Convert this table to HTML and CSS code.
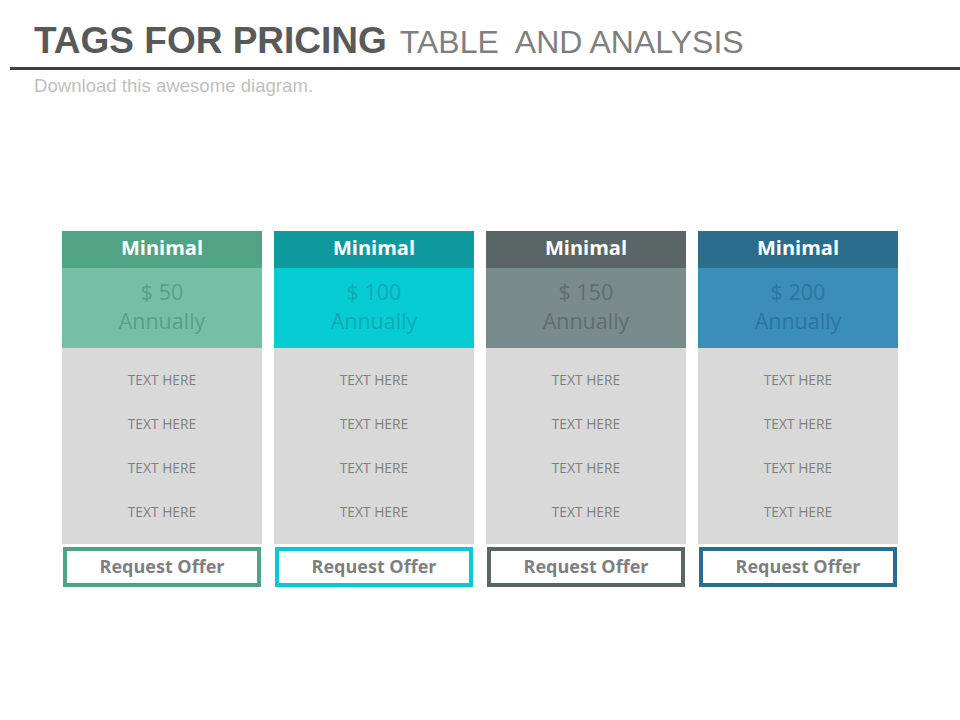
FILE: index.html
```html
<!DOCTYPE html>
<html>
<head>
<meta charset="utf-8">
<link rel="stylesheet" href="styles.css">
</head>
<body>
<header class="top">
  <h1 class="title"><span class="title-bold">TAGS FOR PRICING</span> <span class="title-light">TABLE&nbsp; AND ANALYSIS</span></h1>
  <div class="rule"></div>
  <p class="subtitle">Download this awesome diagram.</p>
</header>
<main class="plans">
  <section class="plan plan-green">
    <div class="plan-head">Minimal</div>
    <div class="plan-price"><div>$ 50</div><div>Annually</div></div>
    <ul class="plan-list"><li>TEXT HERE</li><li>TEXT HERE</li><li>TEXT HERE</li><li>TEXT HERE</li></ul>
    <div class="plan-btn">Request Offer</div>
  </section>
  <section class="plan plan-cyan">
    <div class="plan-head">Minimal</div>
    <div class="plan-price"><div>$ 100</div><div>Annually</div></div>
    <ul class="plan-list"><li>TEXT HERE</li><li>TEXT HERE</li><li>TEXT HERE</li><li>TEXT HERE</li></ul>
    <div class="plan-btn">Request Offer</div>
  </section>
  <section class="plan plan-slate">
    <div class="plan-head">Minimal</div>
    <div class="plan-price"><div>$ 150</div><div>Annually</div></div>
    <ul class="plan-list"><li>TEXT HERE</li><li>TEXT HERE</li><li>TEXT HERE</li><li>TEXT HERE</li></ul>
    <div class="plan-btn">Request Offer</div>
  </section>
  <section class="plan plan-blue">
    <div class="plan-head">Minimal</div>
    <div class="plan-price"><div>$ 200</div><div>Annually</div></div>
    <ul class="plan-list"><li>TEXT HERE</li><li>TEXT HERE</li><li>TEXT HERE</li><li>TEXT HERE</li></ul>
    <div class="plan-btn">Request Offer</div>
  </section>
</main>
</body>
</html>
```
FILE: styles.css
```css
html, body {
  margin: 0;
  padding: 0;
  background: #ffffff;
  width: 960px;
  height: 720px;
  overflow: hidden;
}
body {
  font-family: "Liberation Sans", Arial, sans-serif;
}
.top {
  padding-top: 20px;
}
.title {
  margin: 0 0 0 34px;
  height: 47px;
  line-height: 42px;
  white-space: nowrap;
}
.title-bold {
  font-size: 37px;
  font-weight: bold;
  color: #595959;
  margin-right: 4px;
}
.title-light {
  font-size: 32px;
  font-weight: normal;
  color: #7f7f7f;
}
.rule {
  margin-left: 10px;
  height: 3px;
  background: #404040;
}
.subtitle {
  margin: 5px 0 0 34px;
  font-size: 18.6px;
  line-height: 22px;
  color: #bfbfbf;
}
.plans {
  display: flex;
  gap: 12px;
  margin: 134px 0 0 62px;
  font-family: "Open Sans", "Noto Sans", sans-serif;
}
.plan {
  width: 200px;
  display: flex;
  flex-direction: column;
}
.plan-head {
  height: 37px;
  line-height: 33px;
  text-align: center;
  color: #ffffff;
  font-weight: bold;
  font-size: 20px;
}
.plan-price {
  height: 80px;
  box-sizing: border-box;
  padding-top: 9px;
  text-align: center;
  font-size: 21.5px;
  line-height: 29px;
}
.plan-list {
  list-style: none;
  margin: 0;
  padding: 10px 0;
  background: #d9d9d9;
  height: 196px;
  box-sizing: border-box;
}
.plan-list li {
  height: 44px;
  line-height: 44px;
  text-align: center;
  font-size: 13.8px;
  color: #7f7f7f;
}
.plan-btn {
  margin: 3px 1px 0 1px;
  height: 40px;
  box-sizing: border-box;
  border: 4px solid;
  text-align: center;
  line-height: 30px;
  font-size: 18px;
  font-weight: bold;
  color: #7f7f7f;
  background: #ffffff;
}
.plan-green .plan-head { background: #50a385; }
.plan-green .plan-price { background: #76bea5; color: #5c9f87; }
.plan-green .plan-btn { border-color: #50a385; }
.plan-cyan .plan-head { background: #0f9aa0; }
.plan-cyan .plan-price { background: #07ccd4; color: #0aabb2; }
.plan-cyan .plan-btn { border-color: #0bc9d1; }
.plan-slate .plan-head { background: #5a6565; }
.plan-slate .plan-price { background: #7a8b8b; color: #5e6f70; }
.plan-slate .plan-btn { border-color: #5a6565; }
.plan-blue .plan-head { background: #2a6d8c; }
.plan-blue .plan-price { background: #3a8eb9; color: #2c75a0; }
.plan-blue .plan-btn { border-color: #2a6d8c; }
```
